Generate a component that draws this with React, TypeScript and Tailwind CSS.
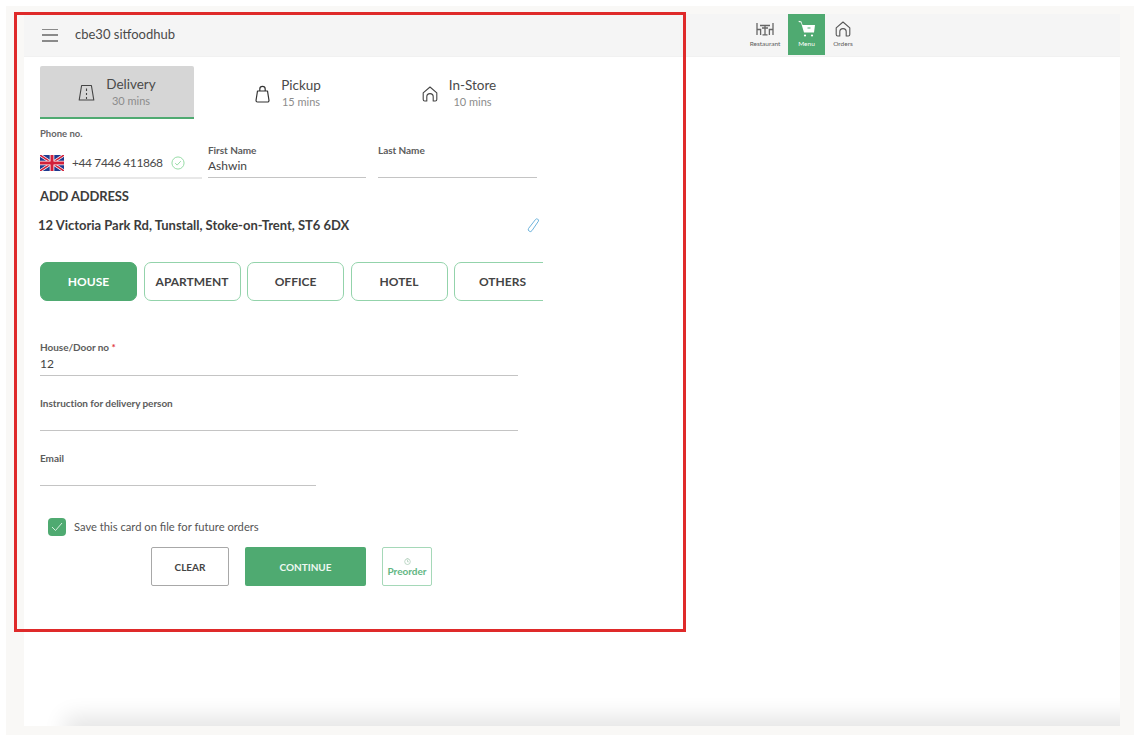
import React from "react";

const GREEN = "#4faa71";

function RoadIcon() {
  return (
    <svg width="17" height="18" viewBox="0 0 17 18" fill="none" stroke="#444" strokeWidth="1.1">
      <path d="M3.6 1.5h9.8L15.8 16H1.2L3.6 1.5z" strokeLinejoin="round" />
      <path d="M8.5 4.5v2.5M8.5 9v2M8.5 13v2" />
    </svg>
  );
}
function BagIcon() {
  return (
    <svg width="15" height="18" viewBox="0 0 15 18" fill="none" stroke="#333" strokeWidth="1.2">
      <path d="M2.5 6h10l1.5 9.5a1.5 1.5 0 0 1-1.5 1.5h-10A1.5 1.5 0 0 1 1 15.5L2.5 6z" strokeLinejoin="round" />
      <path d="M4.8 6V4a2.7 2.7 0 0 1 5.4 0v2" />
    </svg>
  );
}
function HomeIcon({ size = 16, color = "#444" }: { size?: number; color?: string }) {
  return (
    <svg width={size} height={size} viewBox="0 0 16 16" fill="none" stroke={color} strokeWidth="1.1">
      <path d="M1.2 6.8 8 1l6.8 5.8v6.7a1.5 1.5 0 0 1-1.5 1.5h-2.1v-4.2a3.2 3.2 0 0 0-6.4 0V15H2.7a1.5 1.5 0 0 1-1.5-1.5V6.8z" strokeLinejoin="round" />
    </svg>
  );
}
function TableIcon() {
  return (
    <svg width="18" height="14" viewBox="0 0 18 14" fill="none" stroke="#666" strokeWidth="1.3">
      <path d="M1 1v12M1 7.5h3.6V13M17 1v12M17 7.5h-3.6V13M4 3.5h10M6 6h6M9 3.5V12.5M6.5 12.8h5" />
    </svg>
  );
}
function CartIcon() {
  return (
    <svg width="18" height="18" viewBox="0 0 18 18" fill="#fff">
      <path d="M.8 .8 3.4 1.6 4.6 5H17l-1 7.6H6L3 2.6 .6 1.9z" />
      <rect x="9.5" y="7.5" width="3" height="1" fill={GREEN} />
      <circle cx="7" cy="15.5" r="1.1" />
      <circle cx="14" cy="15.5" r="1.1" />
    </svg>
  );
}
function UKFlag() {
  return (
    <svg width="24" height="16" viewBox="0 0 24 16">
      <rect width="24" height="16" fill="#1f3a8f" />
      <path d="M0 0 24 16M24 0 0 16" stroke="#fff" strokeWidth="3" />
      <path d="M0 0 24 16M24 0 0 16" stroke="#d2203a" strokeWidth="1.5" />
      <path d="M12 0v16M0 8h24" stroke="#fff" strokeWidth="4.6" />
      <path d="M12 0v16M0 8h24" stroke="#d2203a" strokeWidth="3" />
    </svg>
  );
}

function Tab({ icon, title, sub, active }: { icon: React.ReactNode; title: string; sub: string; active?: boolean }) {
  return (
    <div
      className={
        "w-[154px] h-[53px] flex items-center justify-center gap-[11px] rounded-t-[2px] " +
        (active ? "bg-[#d6d6d6] border-b-2 border-[#4faa71]" : "")
      }
    >
      <div className="mt-[2px]">{icon}</div>
      <div className="flex flex-col items-center pt-[2px]">
        <span className="text-[13.5px] leading-[17px] text-[#4a4a4a]">{title}</span>
        <span className="text-[11px] leading-[16px] text-[#8c8c8c]">{sub}</span>
      </div>
    </div>
  );
}

function TypeBtn({ label, active }: { label: string; active?: boolean }) {
  return (
    <div
      className={
        "shrink-0 w-[97px] h-[39px] rounded-[7px] border-[1.5px] flex items-center justify-center text-[12px] font-bold " +
        (active ? "bg-[#4faa71] border-[#4faa71] text-white" : "bg-white border-[#93d3ab] text-[#444]")
      }
    >
      {label}
    </div>
  );
}

function Field({
  label,
  value,
  req,
  width,
  valueGap = "mt-[3px]",
}: {
  label: string;
  value?: string;
  req?: boolean;
  width: string;
  valueGap?: string;
}) {
  return (
    <div className={width + " border-b border-[#c4c4c4]"}>
      <div className="text-[10px] leading-[12px] font-bold tracking-[-0.05px] text-[#5c5c5c]">
        {label}
        {req && <span className="text-[#e0393e]">&nbsp;*</span>}
      </div>
      <div className={"text-[12px] leading-[16px] text-[#444] " + valueGap}>{value}</div>
    </div>
  );
}

export default function App() {
  return (
    <div className="relative w-[1140px] h-[741px] bg-white overflow-hidden font-['Lato',sans-serif] pt-[6px] px-[6px]">
      <div className="w-[1128px] h-[729px] bg-[#f9f8f6] pt-[8px] pl-[18px] pr-[14px]">
        <div className="relative w-[1096px] h-[712px] bg-white overflow-hidden">
          {/* header */}
          <header className="h-[43px] bg-[#f5f5f5] border-b border-[#f1f1f1] flex items-center pl-[18px] pr-[259px]">
            <div className="w-[16px] h-[13px] flex flex-col justify-between">
              <span className="h-[1.5px] bg-[#8a8a8a]" />
              <span className="h-[1.5px] bg-[#8a8a8a]" />
              <span className="h-[1.5px] bg-[#8a8a8a]" />
            </div>
            <span className="ml-[17px] text-[13px] text-[#4a4a4a]">cbe30 sitfoodhub</span>
            <nav className="ml-auto flex h-[41px] items-stretch self-start">
              <div className="w-[46px] flex flex-col items-center pt-[8px] text-[6.5px] text-[#5c5c5c]">
                <TableIcon />
                <span className="mt-[4px] leading-[8px]">Restaurant</span>
              </div>
              <div className="w-[37px] bg-[#4faa71] flex flex-col items-center pt-[6px] text-[6.5px] text-white">
                <CartIcon />
                <span className="mt-[2px] leading-[8px]">Menu</span>
              </div>
              <div className="w-[36px] flex flex-col items-center pt-[7px] text-[6.5px] text-[#5c5c5c]">
                <HomeIcon size={16} color="#555" />
                <span className="mt-[3px] leading-[8px]">Orders</span>
              </div>
            </nav>
          </header>

          {/* form */}
          <div className="w-[519px] ml-[16px]">
            <div className="flex gap-[17px] mt-[9px]">
              <Tab icon={<RoadIcon />} title="Delivery" sub="30 mins" active />
              <Tab icon={<BagIcon />} title="Pickup" sub="15 mins" />
              <Tab icon={<HomeIcon size={16} />} title="In-Store" sub="10 mins" />
            </div>

            <div className="flex mt-[9px] h-[51px] items-start">
              <div className="w-[162px] h-[51px] border-b-2 border-[#e8e8e8]">
                <div className="text-[9.5px] leading-[12px] font-bold text-[#666]">Phone no.</div>
                <div className="flex items-center mt-[14px]">
                  <UKFlag />
                  <span className="ml-[8px] text-[12px] tracking-[-0.4px] text-[#4a4a4a]">+44 7446 411868</span>
                  <svg className="ml-[8px]" width="14" height="14" viewBox="0 0 15 15" fill="none" stroke="#8fd9a0" strokeWidth="1">
                    <circle cx="7.5" cy="7.5" r="6.5" />
                    <path d="m4.5 7.7 2.1 2 3.9-4.2" />
                  </svg>
                </div>
              </div>
              <div className="mt-[16px] ml-[6px]">
                <Field label="First Name" value="Ashwin" width="w-[158px] h-[34px]" valueGap="mt-[2px]" />
              </div>
              <div className="mt-[16px] ml-[12px]">
                <Field label="Last Name" width="w-[159px] h-[34px]" />
              </div>
            </div>

            <div className="mt-[9px] text-[13px] leading-[16px] font-bold tracking-[-0.15px] text-[#3c3c3c]">ADD ADDRESS</div>

            <div className="flex items-center justify-between mt-[13px] ml-[-2px] w-[502px]">
              <span className="text-[13px] leading-[16px] font-bold tracking-[-0.02px] text-[#3c3c3c]">12 Victoria Park Rd, Tunstall, Stoke-on-Trent, ST6 6DX</span>
              <svg width="14" height="15" viewBox="0 0 14 15" fill="none" stroke="#6db3dc" strokeWidth="1">
                <path d="M9.5 1.5a1.7 1.7 0 0 1 2.9 1.7L6 12.6a2 2 0 0 1-3.4-2.2L9.5 1.5z" />
              </svg>
            </div>

            <div className="flex gap-[6.5px] mt-[29px] w-[503px] overflow-hidden">
              <TypeBtn label="HOUSE" active />
              <TypeBtn label="APARTMENT" />
              <TypeBtn label="OFFICE" />
              <TypeBtn label="HOTEL" />
              <TypeBtn label="OTHERS" />
            </div>

            <div className="mt-[40px]">
              <Field label="House/Door no" req value="12" width="w-[478px] h-[35px]" />
            </div>
            <div className="mt-[21px]">
              <Field label="Instruction for delivery person" width="w-[478px] h-[34px]" />
            </div>
            <div className="mt-[21px]">
              <Field label="Email" width="w-[276px] h-[34px]" />
            </div>

            <div className="flex items-center mt-[32px] ml-[8px]">
              <div className="w-[18px] h-[18px] rounded-[4px] bg-[#4faa71] flex items-center justify-center">
                <svg width="12" height="10" viewBox="0 0 12 10" fill="none" stroke="#d8f0e0" strokeWidth="1">
                  <path d="m1 5 3.5 3.5L11 1" />
                </svg>
              </div>
              <span className="ml-[8px] text-[11.2px] text-[#555]">Save this card on file for future orders</span>
            </div>

            <div className="flex mt-[11px] ml-[111px]">
              <div className="w-[78px] h-[39px] pt-[1px] rounded-[2px] border border-[#a8a8a8] flex items-center justify-center text-[10px] font-bold text-[#444]">CLEAR</div>
              <div className="w-[121px] h-[39px] pt-[1px] ml-[16px] rounded-[2px] bg-[#4faa71] flex items-center justify-center text-[10px] font-bold text-[#eef8f1]">CONTINUE</div>
              <div className="w-[50px] h-[39px] pt-[1px] ml-[16px] rounded-[2px] border border-[#a5d8b8] flex flex-col items-center justify-center text-[10px] leading-[11px] font-bold text-[#62b683]">
                <svg width="7" height="7" viewBox="0 0 7 7" fill="none" stroke="#a5c9b2" strokeWidth="0.7" className="mb-[1px]">
                  <circle cx="3.5" cy="3.7" r="2.8" />
                  <path d="M3.5 2v1.8h1.3M2.5.3h2" />
                </svg>
                Preorder
              </div>
            </div>
          </div>

          {/* bottom shade */}
          <div className="absolute left-[50px] right-[-40px] bottom-[-10px] h-[10px] shadow-[0_0_22px_9px_rgba(0,0,0,0.11)]" />
        </div>
      </div>

      {/* red annotation */}
      <div className="absolute left-[14px] top-[12px] w-[672px] h-[620px] border-[3px] border-[#df2a2a] pointer-events-none" />
    </div>
  );
}
